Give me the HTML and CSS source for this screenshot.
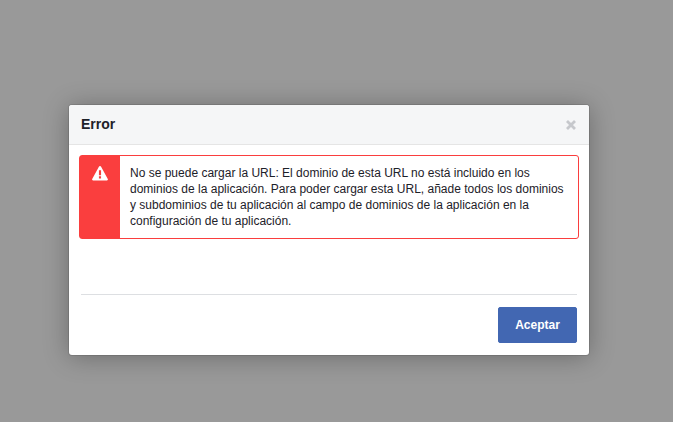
FILE: index.html
```html
<!DOCTYPE html>
<html lang="es">
<head>
<meta charset="utf-8">
<title>Error</title>
<link rel="stylesheet" href="styles.css">
</head>
<body>
<div class="modal">
  <header class="modal-header">
    <h1 class="modal-title">Error</h1>
    <svg class="close" width="12" height="12" viewBox="0 0 12 12" aria-label="Cerrar"><path d="M2 2l8 8M10 2l-8 8" stroke="#c6c8cc" stroke-width="2.8" fill="none"/></svg>
  </header>
  <div class="modal-body">
    <div class="alert">
      <div class="alert-icon">
        <svg width="16" height="15" viewBox="0.3 0.6 16.4 15.400"><path fill-rule="evenodd" fill="#fff" d="M8.5 0.6c.5 0 .8.2 1 .6l7 12.8c.4.7 0 1.4-.8 1.4H1.300c-.8 0-1.200-.7-.8-1.400l7-12.800c.2-.4.5-.6 1-.6zM7.400 5v5.200h2.200V5zM7.400 11.200v2.200h2.200v-2.200z"/></svg>
      </div>
      <p class="alert-text">No se puede cargar la URL: El dominio de esta URL no está incluido en los dominios de la aplicación. Para poder cargar esta URL, añade todos los dominios y subdominios de tu aplicación al campo de dominios de la aplicación en la configuración de tu aplicación.</p>
    </div>
  </div>
  <footer class="modal-footer">
    <button class="btn" type="button">Aceptar</button>
  </footer>
</div>
</body>
</html>
```
FILE: styles.css
```css
* { box-sizing: border-box; }
html, body { height: 100%; margin: 0; }
body {
  background: #999999;
  padding: 105px 0 0 69px;
  font-family: "Liberation Sans", Arial, sans-serif;
  overflow: hidden;
}
.modal {
  width: 520px;
  height: 250px;
  background: #fff;
  border-radius: 3px;
  box-shadow: 0 2px 26px rgba(0, 0, 0, .3), 0 0 0 1px rgba(0, 0, 0, .1);
  display: flex;
  flex-direction: column;
}
.modal-header {
  height: 40px;
  flex: none;
  background: #f5f6f7;
  border-bottom: 1px solid #e5e5e5;
  border-radius: 3px 3px 0 0;
  display: flex;
  align-items: center;
  justify-content: space-between;
  padding: 0 12px;
}
.modal-title {
  margin: 0 0 2px;
  font-size: 14px;
  font-weight: 700;
  color: #1d2129;
}
.close { display: block; }
.modal-body { padding: 10px 10px 0; flex: none; }
.alert {
  height: 84px;
  border: 1px solid #fa3e3e;
  border-radius: 3px;
  display: flex;
}
.alert-icon {
  width: 40px;
  flex: none;
  background: #fa3e3e;
  display: flex;
  justify-content: center;
  align-items: flex-start;
  padding-top: 10px;
}
.alert-text {
  margin: 0;
  padding: 9px 10px 0;
  font-size: 12px;
  line-height: 16px;
  color: #1d2129;
}
.modal-footer {
  margin: 55px 12px 0;
  border-top: 1px solid #dddfe2;
  padding-top: 12px;
  display: flex;
  justify-content: flex-end;
}
.btn {
  width: 79px;
  height: 36px;
  background: #4267b2;
  border: 1px solid #4267b2;
  border-radius: 2px;
  color: #fff;
  font-family: inherit;
  font-size: 12px;
  font-weight: 700;
  padding: 0;
}
```
